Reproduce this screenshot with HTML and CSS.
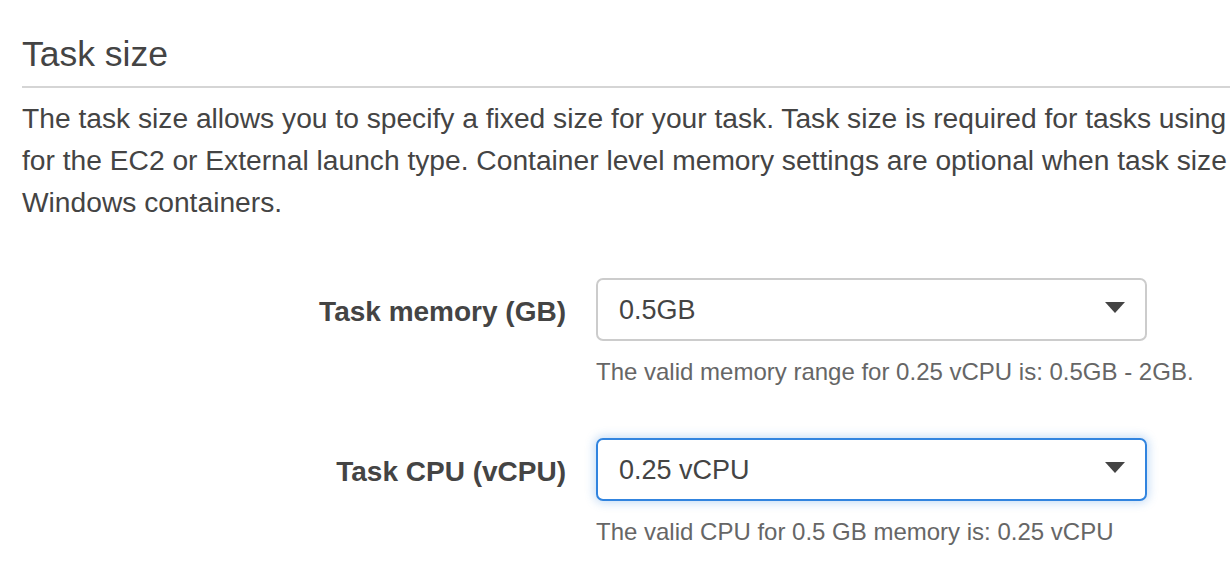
FILE: index.html
```html
<!DOCTYPE html>
<html lang="en">
<head>
<meta charset="utf-8">
<title>Task size</title>
<link rel="stylesheet" href="styles.css">
</head>
<body>
<section class="task-size">
  <h2 class="section-title">Task size</h2>
  <p class="section-desc">
    <span class="line">The task size allows you to specify a fixed size for your task. Task size is required for tasks using</span>
    <span class="line">for the EC2 or External launch type. Container level memory settings are optional when task size</span>
    <span class="line">Windows containers.</span>
  </p>

  <div class="form-row first">
    <label class="field-label">Task memory (GB)</label>
    <div class="field-control">
      <div class="select">
        <span class="select-value">0.5GB</span>
        <svg class="caret" width="20" height="11" viewBox="0 0 20 11"><path d="M0 0 H20 L10 11 Z" fill="#444"/></svg>
      </div>
      <div class="help">The valid memory range for 0.25 vCPU is: 0.5GB - 2GB.</div>
    </div>
  </div>

  <div class="form-row">
    <label class="field-label">Task CPU (vCPU)</label>
    <div class="field-control">
      <div class="select focused">
        <span class="select-value">0.25 vCPU</span>
        <svg class="caret" width="20" height="11" viewBox="0 0 20 11"><path d="M0 0 H20 L10 11 Z" fill="#444"/></svg>
      </div>
      <div class="help">The valid CPU for 0.5 GB memory is: 0.25 vCPU</div>
    </div>
  </div>
</section>
</body>
</html>
```
FILE: styles.css
```css
html, body {
  margin: 0;
  padding: 0;
  background: #ffffff;
  overflow: hidden;
}

body {
  font-family: "Liberation Sans", Arial, Helvetica, sans-serif;
  color: #444444;
}

.task-size {
  padding: 33px 0 0 22px;
}

.section-title {
  margin: 0;
  font-size: 35.5px;
  font-weight: 400;
  line-height: 42px;
  color: #444444;
  padding-bottom: 11px;
  border-bottom: 2px solid #d5d5d5;
}

.section-desc {
  margin: 9px 0 0 0;
  font-size: 28.2px;
  line-height: 42px;
  color: #444444;
}

.section-desc .line {
  display: block;
  white-space: nowrap;
}

.form-row {
  display: grid;
  grid-template-columns: 544px 551px;
  column-gap: 30px;
  margin-top: 48px;
}

.form-row.first {
  margin-top: 55px;
}

.field-label {
  text-align: right;
  font-size: 28px;
  font-weight: 700;
  line-height: 63px;
  padding-top: 2px;
  color: #444444;
  white-space: nowrap;
}

.select {
  box-sizing: border-box;
  height: 63px;
  border: 2px solid #cccccc;
  border-radius: 7px;
  display: flex;
  align-items: center;
  justify-content: space-between;
  padding: 0 20px 4px 21px;
  background: #ffffff;
}

.select.focused {
  border-color: #3184df;
  box-shadow: 0 0 10px 2px rgba(49, 132, 223, 0.28);
}

.select-value {
  font-size: 27px;
  color: #444444;
  padding-top: 5px;
}

.caret {
  display: block;
  flex: none;
}

.help {
  margin-top: 13px;
  font-size: 24px;
  line-height: 36px;
  color: #666666;
  white-space: nowrap;
}
```
